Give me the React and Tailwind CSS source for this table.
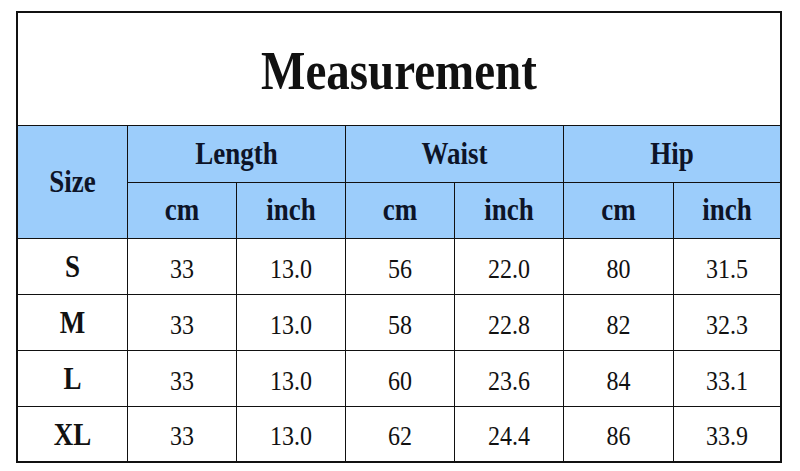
export default function App() {
  const data = [
    ["S", "33", "13.0", "56", "22.0", "80", "31.5"],
    ["M", "33", "13.0", "58", "22.8", "82", "32.3"],
    ["L", "33", "13.0", "60", "23.6", "84", "33.1"],
    ["XL", "33", "13.0", "62", "24.4", "86", "33.9"],
  ];
  const hdr = "bg-[#9ccdfb] flex items-center justify-center";
  const hText = "inline-block scale-y-[1.15] font-bold text-[27px] leading-none text-[#0d1428]";
  return (
    <div className="w-[800px] h-[471px] bg-white pt-[11px] pl-[16px]" style={{ fontFamily: '"Liberation Serif", "Times New Roman", serif' }}>
      <div className="w-[766px] h-[452px] border-2 border-[#111] bg-[#111]">
        <div className="grid grid-cols-[109px_108px_108px_108px_108px_109px_106px] grid-rows-[112px_56px_55px_55px_55px_55px_54px] gap-px">
          <div className="col-span-7 bg-white flex items-center justify-center">
            <span className="inline-block scale-y-[1.15] font-bold text-[47px] leading-none text-[#111] translate-y-[2px]">Measurement</span>
          </div>
          <div className={`row-span-2 ${hdr}`}><span className={hText}>Size</span></div>
          <div className={`col-span-2 ${hdr}`}><span className={hText}>Length</span></div>
          <div className={`col-span-2 ${hdr}`}><span className={hText}>Waist</span></div>
          <div className={`col-span-2 ${hdr}`}><span className={hText}>Hip</span></div>
          {["cm", "inch", "cm", "inch", "cm", "inch"].map((t, i) => (
            <div key={i} className={hdr}><span className={hText}>{t}</span></div>
          ))}
          {data.map((row, r) =>
            row.map((v, c) => (
              <div key={`${r}-${c}`} className="bg-white flex items-center justify-center">
                {c === 0 ? (
                  <span className="inline-block scale-y-[1.15] font-bold text-[27px] leading-none text-[#111] translate-y-[1px]">{v}</span>
                ) : (
                  <span className="inline-block scale-y-[1.15] text-[24px] leading-none text-[#111] translate-y-[2px]">{v}</span>
                )}
              </div>
            ))
          )}
        </div>
      </div>
    </div>
  );
}
